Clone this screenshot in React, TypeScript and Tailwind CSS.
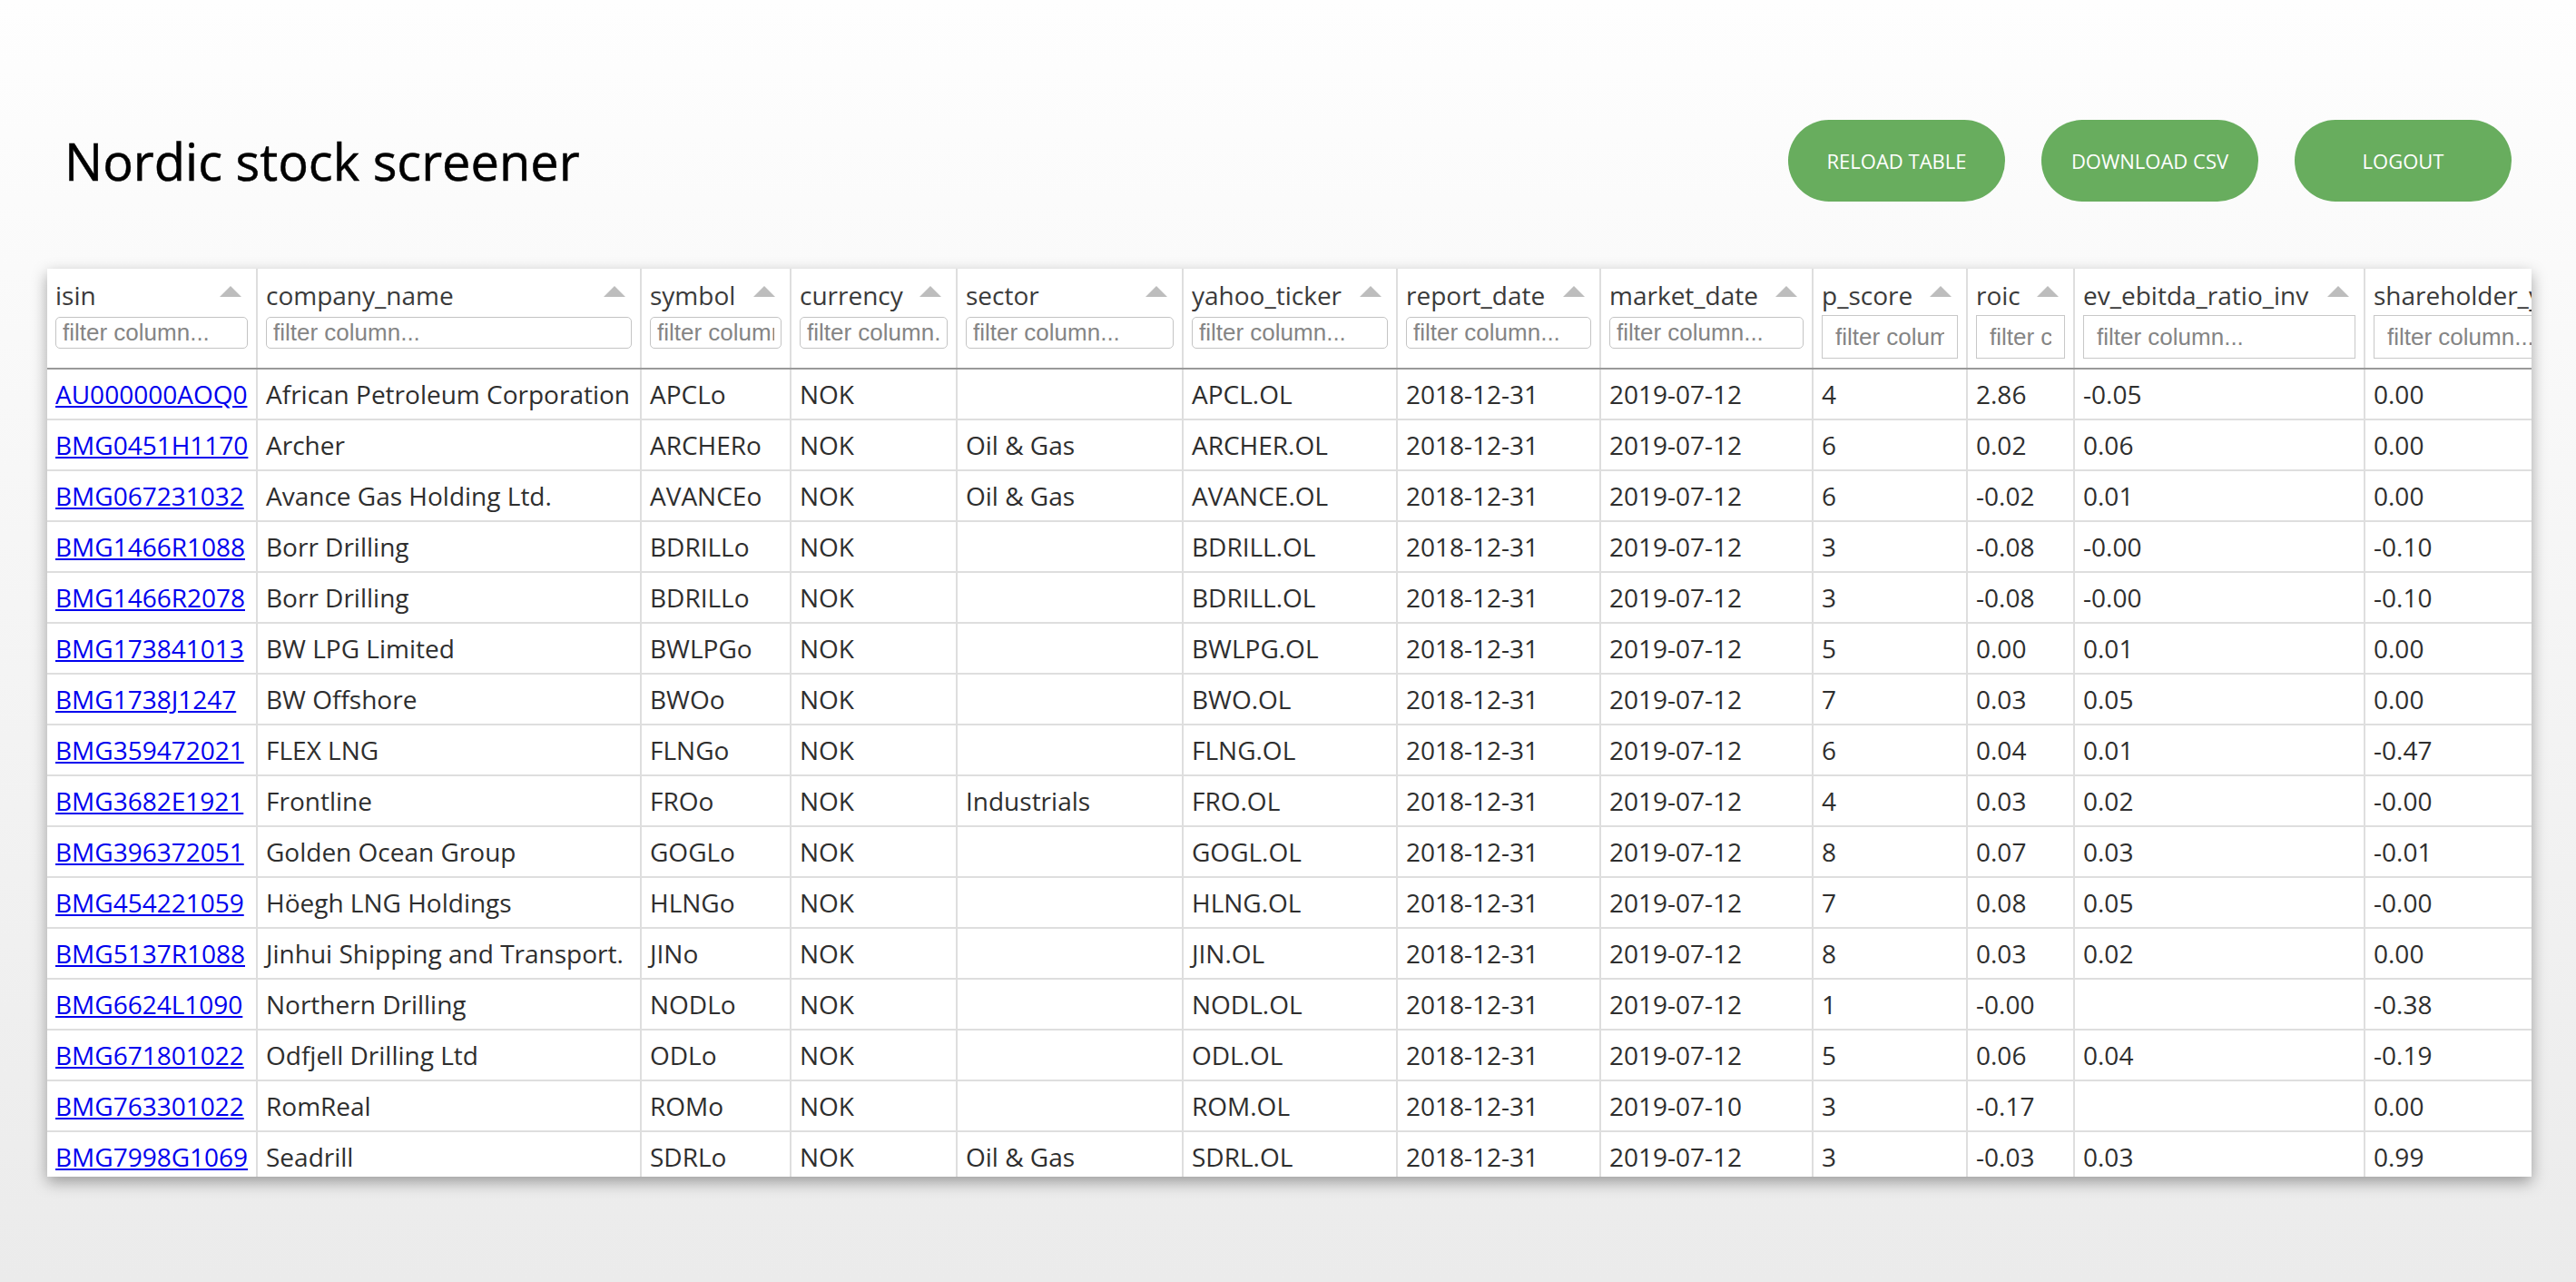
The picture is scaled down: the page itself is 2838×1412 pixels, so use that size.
import React from 'react';

const COLUMNS = [
  { key: 'isin', width: 'w-[231px]', numeric: false },
  { key: 'company_name', width: 'w-[423px]', numeric: false },
  { key: 'symbol', width: 'w-[165px]', numeric: false },
  { key: 'currency', width: 'w-[183px]', numeric: false },
  { key: 'sector', width: 'w-[249px]', numeric: false },
  { key: 'yahoo_ticker', width: 'w-[236px]', numeric: false },
  { key: 'report_date', width: 'w-[224px]', numeric: false },
  { key: 'market_date', width: 'w-[234px]', numeric: false },
  { key: 'p_score', width: 'w-[170px]', numeric: true },
  { key: 'roic', width: 'w-[118px]', numeric: true },
  { key: 'ev_ebitda_ratio_inv', width: 'w-[320px]', numeric: true },
  { key: 'shareholder_yield', width: 'w-[300px]', numeric: true },
];

// isin, company_name, symbol, sector, p_score, roic, ev_ebitda_ratio_inv, shareholder_yield
const RAW = [
  ['AU000000AOQ0', 'African Petroleum Corporation', 'APCL', '', '4', '2.86', '-0.05', '0.00'],
  ['BMG0451H1170', 'Archer', 'ARCHER', 'Oil & Gas', '6', '0.02', '0.06', '0.00'],
  ['BMG067231032', 'Avance Gas Holding Ltd.', 'AVANCE', 'Oil & Gas', '6', '-0.02', '0.01', '0.00'],
  ['BMG1466R1088', 'Borr Drilling', 'BDRILL', '', '3', '-0.08', '-0.00', '-0.10'],
  ['BMG1466R2078', 'Borr Drilling', 'BDRILL', '', '3', '-0.08', '-0.00', '-0.10'],
  ['BMG173841013', 'BW LPG Limited', 'BWLPG', '', '5', '0.00', '0.01', '0.00'],
  ['BMG1738J1247', 'BW Offshore', 'BWO', '', '7', '0.03', '0.05', '0.00'],
  ['BMG359472021', 'FLEX LNG', 'FLNG', '', '6', '0.04', '0.01', '-0.47'],
  ['BMG3682E1921', 'Frontline', 'FRO', 'Industrials', '4', '0.03', '0.02', '-0.00'],
  ['BMG396372051', 'Golden Ocean Group', 'GOGL', '', '8', '0.07', '0.03', '-0.01'],
  ['BMG454221059', 'Höegh LNG Holdings', 'HLNG', '', '7', '0.08', '0.05', '-0.00'],
  ['BMG5137R1088', 'Jinhui Shipping and Transport.', 'JIN', '', '8', '0.03', '0.02', '0.00'],
  ['BMG6624L1090', 'Northern Drilling', 'NODL', '', '1', '-0.00', '', '-0.38'],
  ['BMG671801022', 'Odfjell Drilling Ltd', 'ODL', '', '5', '0.06', '0.04', '-0.19'],
  ['BMG763301022', 'RomReal', 'ROM', '', '3', '-0.17', '', '0.00'],
  ['BMG7998G1069', 'Seadrill', 'SDRL', 'Oil & Gas', '3', '-0.03', '0.03', '0.99'],
];

const ROWS = RAW.map(([isin, name, sym, sector, p, roic, ev, sy]) => [
  isin,
  name,
  `${sym}o`,
  'NOK',
  sector,
  `${sym}.OL`,
  '2018-12-31',
  sym === 'ROM' ? '2019-07-10' : '2019-07-12',
  p,
  roic,
  ev,
  sy,
]);

const SortArrow = () => (
  <svg className="absolute right-[16px] top-[19px]" width="24" height="12" viewBox="0 0 24 12">
    <polygon points="0,12 12,0 24,12" fill="#bdbdbd" />
  </svg>
);

export default function App() {
  return (
    <div className="min-h-screen bg-linear-to-b from-[#fefefe] to-[#ebebeb] font-['Open_Sans',sans-serif] pl-[52px] pr-[49px] pb-[116px]">
      <header className="flex items-center justify-between pt-[132px] pl-[19px] pr-[22px]">
        <h1 className="text-[56px] leading-[90px] text-black [-webkit-text-stroke:0.5px_#000]">
          Nordic stock screener
        </h1>
        <div className="flex gap-[40px]">
          {['RELOAD TABLE', 'DOWNLOAD CSV', 'LOGOUT'].map((label) => (
            <button
              key={label}
              className="w-[239px] h-[90px] rounded-full bg-[#68ad5e] text-white text-[22px]"
            >
              {label}
            </button>
          ))}
        </div>
      </header>

      <div className="mt-[74px] h-[1000px] bg-white overflow-hidden shadow-[0_6px_16px_rgba(0,0,0,0.35)]">
        <table className="table-fixed border-collapse w-[2853px]">
          <colgroup>
            {COLUMNS.map((c) => (
              <col key={c.key} className={c.width} />
            ))}
          </colgroup>
          <thead>
            <tr>
              {COLUMNS.map((c) => (
                <th
                  key={c.key}
                  className="relative align-top text-left font-normal px-[9px] pt-[10px] pb-[10px] border-r-2 border-r-[#dedede] border-b-2 border-b-[#999]"
                >
                  <div className="h-[40px] leading-[38px] text-[28px] text-[#3a3a3a] whitespace-nowrap overflow-hidden pr-[30px]">
                    {c.key}
                  </div>
                  {c.numeric ? (
                    <input
                      placeholder="filter column..."
                      className="block w-full mt-[1px] h-[48px] px-[14px] border border-[#c8c8c8] bg-white text-[26px] font-['Liberation_Sans',sans-serif] placeholder:text-[#858585] outline-none"
                    />
                  ) : (
                    <input
                      placeholder="filter column..."
                      className="block w-full mt-[3px] h-[35px] px-[7px] rounded-[5px] border border-[#c4c4c4] bg-white text-[26px] font-['Liberation_Sans',sans-serif] placeholder:text-[#858585] outline-none"
                    />
                  )}
                  <SortArrow />
                </th>
              ))}
            </tr>
          </thead>
          <tbody>
            {ROWS.map((row) => (
              <tr key={row[0]}>
                {row.map((cell, i) => (
                  <td
                    key={i}
                    className="h-[56px] px-[9px] text-[28px] text-[#2e2e2e] whitespace-nowrap overflow-hidden border-r-2 border-b-2 border-[#dedede]"
                  >
                    {i === 0 ? (
                      <a href="#" className="text-[#0000ee] underline">
                        {cell}
                      </a>
                    ) : (
                      cell
                    )}
                  </td>
                ))}
              </tr>
            ))}
          </tbody>
        </table>
      </div>
    </div>
  );
}
